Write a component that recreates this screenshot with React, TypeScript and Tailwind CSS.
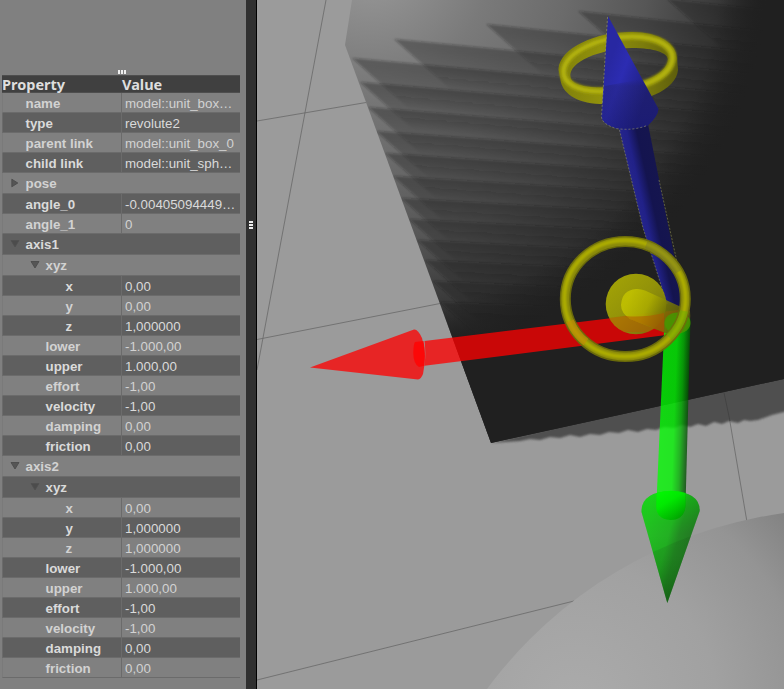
import React from "react";

type Row = {
  name: string;
  value?: string;
  level: number;
  tall?: boolean;
  arrow?: "open" | "closed";
};

const axis = (title: string, y: string): Row[] => [
  { name: title, level: 0, tall: true, arrow: "open" },
  { name: "xyz", level: 1, tall: true, arrow: "open" },
  { name: "x", value: "0,00", level: 2 },
  { name: "y", value: y, level: 2 },
  { name: "z", value: "1,000000", level: 2 },
  { name: "lower", value: "-1.000,00", level: 1 },
  { name: "upper", value: "1.000,00", level: 1 },
  { name: "effort", value: "-1,00", level: 1 },
  { name: "velocity", value: "-1,00", level: 1 },
  { name: "damping", value: "0,00", level: 1 },
  { name: "friction", value: "0,00", level: 1 },
];

const rows: Row[] = [
  { name: "name", value: "model::unit_box…", level: 0 },
  { name: "type", value: "revolute2", level: 0 },
  { name: "parent link", value: "model::unit_box_0", level: 0 },
  { name: "child link", value: "model::unit_sph…", level: 0 },
  { name: "pose", level: 0, tall: true, arrow: "closed" },
  { name: "angle_0", value: "-0.00405094449…", level: 0 },
  { name: "angle_1", value: "0", level: 0 },
  ...axis("axis1", "0,00"),
  ...axis("axis2", "1,000000"),
];

const indent = ["pl-[22.5px]", "pl-[42.5px]", "pl-[62.5px]"];

function PropertyRow({ row, index }: { row: Row; index: number }) {
  const dark = index % 2 === 1;
  return (
    <div
      className={`flex border-b border-[#6b6b6b] ${row.tall ? "h-[21px]" : "h-5"} ${
        dark ? "border-l bg-[#5f5f5f] text-[#dadada]" : "border-l border-l-[#7a7a7a] bg-[#808080] text-[#d2d2d2]"
      }`}
    >
      <div
        className={`flex w-[119px] shrink-0 items-center font-bold leading-none ${
          row.arrow ? (row.level ? "pl-[27px]" : "pl-[7px]") : indent[row.level]
        } ${row.value ? "border-r border-[#6b6b6b]" : ""}`}
      >
        {row.arrow && (
          <svg viewBox="0 0 10 10" className="mr-[5.5px] h-2.5 w-2.5 shrink-0">
            <path
              d={row.arrow === "open" ? "M1 1.5H9L5 8Z" : "M1.8 1.2L7.8 5L1.8 8.8Z"}
              fill={dark ? "#4c4c4c" : "#555"}
              stroke={dark ? "#505050" : "#484848"}
              strokeWidth="0.8"
            />
          </svg>
        )}
        <span className="pt-[2px]">{row.name}</span>
      </div>
      {row.value && (
        <div className="flex items-center whitespace-nowrap pl-[3px] pt-[2px] leading-none">{row.value}</div>
      )}
    </div>
  );
}

/* Shadow stair edges across the box face: start x, start y, slope. */
const stairs: [number, number, number][] = [
  [758, -1, 0.11],
  [667, -1, 0.11],
  [578, 11, 0.108],
  [486, 24, 0.105],
  [394, 39, 0.097],
  [352, 58, 0.092],
  [360, 82, 0.086],
  [368, 107, 0.082],
  [376, 131, 0.075],
  [385, 153, 0.07],
  [393, 176, 0.063],
  [401, 198, 0.057],
  [409, 219, 0.053],
  [417, 240, 0.05],
  [425, 260, 0.048],
  [433, 281, 0.045],
  [440, 302, 0.04],
];

function Stairs() {
  return (
    <g clipPath="url(#boxClip)">
      {stairs.map(([x, y, s], i) => {
        const w = 800 - x;
        const d = i < 6 ? 46 : i < 11 ? 43 : 41;
        return (
          <g key={i}>
            <linearGradient id={`stair${i}`} gradientUnits="userSpaceOnUse" x1={x} y1={y} x2={x - d * s} y2={y + d}>
              <stop offset="0" stopColor="#202020" stopOpacity="0.36" />
              <stop offset="0.15" stopColor="#202020" stopOpacity="0.35" />
              <stop offset="0.5" stopColor="#202020" stopOpacity="0.27" />
              <stop offset="1" stopColor="#202020" stopOpacity="0" />
            </linearGradient>
            <path
              d={`M${x} ${y}L${x + w} ${y + w * s}V${y + w * s + d}L${x + d * 1.22} ${y + d * 1.08}Z`}
              fill={`url(#stair${i})`}
              filter="url(#soft)"
            />
          </g>
        );
      })}
      <rect x="340" width="450" height="450" fill="url(#falloff)" />
    </g>
  );
}

function Scene() {
  const box = "M352 0L345 45L491 443L784 379V0Z";
  const rim =
    "M563.500 71C565 53 598 36.500 632 36.500C660 37 672.500 47 672.500 58C671 76 645 90 600 91.500C578 91 563 84 563.500 71Z";
  return (
    <svg viewBox="257 0 527 689" className="block h-[689px] w-[527px]">
      <defs>
        <clipPath id="boxClip"><path d={box} /></clipPath>
        <filter id="soft" x="-5%" y="-20%" width="110%" height="140%"><feGaussianBlur stdDeviation="0.8" /></filter>
        <radialGradient id="face" gradientUnits="userSpaceOnUse" cx="370" cy="-40" r="400">
          <stop offset="0.1" stopColor="#909090" />
          <stop offset="0.3" stopColor="#7a7a7a" />
          <stop offset="0.5" stopColor="#6b6b6b" />
          <stop offset="0.7" stopColor="#565656" />
          <stop offset="0.86" stopColor="#3c3c3c" />
          <stop offset="1" stopColor="#202020" />
        </radialGradient>
        <radialGradient id="falloff" gradientUnits="userSpaceOnUse" cx="370" cy="-40" r="400">
          <stop offset="0.88" stopColor="#202020" stopOpacity="0" />
          <stop offset="1" stopColor="#202020" stopOpacity="1" />
        </radialGradient>
        <radialGradient id="ball" gradientUnits="userSpaceOnUse" cx="575" cy="705" r="285">
          <stop offset="0" stopColor="#ababab" />
          <stop offset="0.5" stopColor="#a1a1a1" />
          <stop offset="0.8" stopColor="#949494" />
          <stop offset="1" stopColor="#828282" />
        </radialGradient>
        <linearGradient id="blueCone" gradientUnits="userSpaceOnUse" x1="603" y1="80" x2="646" y2="96">
          <stop offset="0" stopColor="#2828a2" />
          <stop offset="0.35" stopColor="#2c2cb2" />
          <stop offset="1" stopColor="#1e1e7c" />
        </linearGradient>
        <linearGradient id="blueLow" gradientUnits="userSpaceOnUse" x1="0" y1="80" x2="0" y2="130">
          <stop offset="0" stopColor="#20205a" stopOpacity="0" />
          <stop offset="0.12" stopColor="#20205a" stopOpacity="0.3" />
          <stop offset="1" stopColor="#18186a" stopOpacity="0.45" />
        </linearGradient>
        <linearGradient id="blueShaft" gradientUnits="userSpaceOnUse" x1="630" y1="178" x2="657" y2="172">
          <stop offset="0" stopColor="#25258c" />
          <stop offset="0.25" stopColor="#212188" />
          <stop offset="0.6" stopColor="#14144f" />
          <stop offset="1" stopColor="#15154f" />
        </linearGradient>
        <linearGradient id="greenShaft" gradientUnits="userSpaceOnUse" x1="660" y1="420" x2="688" y2="421">
          <stop offset="0" stopColor="#00ff00" />
          <stop offset="0.5" stopColor="#00fa00" />
          <stop offset="0.75" stopColor="#00b800" />
          <stop offset="1" stopColor="#004a00" />
        </linearGradient>
        <linearGradient id="greenCone" gradientUnits="userSpaceOnUse" x1="645" y1="525" x2="694" y2="538">
          <stop offset="0" stopColor="#00ce00" />
          <stop offset="0.5" stopColor="#00b400" />
          <stop offset="0.7" stopColor="#007c00" />
          <stop offset="1" stopColor="#006000" />
        </linearGradient>
        <linearGradient id="greenTop" gradientUnits="userSpaceOnUse" x1="0" y1="490" x2="0" y2="600">
          <stop offset="0" stopColor="#00ff00" stopOpacity="0.4" />
          <stop offset="0.4" stopColor="#00c000" stopOpacity="0.1" />
          <stop offset="1" stopColor="#005000" stopOpacity="0.45" />
        </linearGradient>
        <linearGradient id="greenCap" x1="0" y1="0" x2="0.6" y2="1">
          <stop offset="0" stopColor="#00ff00" />
          <stop offset="0.45" stopColor="#00ee00" />
          <stop offset="1" stopColor="#00a800" />
        </linearGradient>
        <linearGradient id="disk" x1="0.1" y1="0" x2="1" y2="0.9">
          <stop offset="0" stopColor="#acac04" />
          <stop offset="0.5" stopColor="#999908" />
          <stop offset="1" stopColor="#70700e" />
        </linearGradient>
        <linearGradient id="rod" gradientUnits="userSpaceOnUse" x1="630" y1="295" x2="682" y2="322">
          <stop offset="0" stopColor="#c2c200" />
          <stop offset="0.35" stopColor="#acac00" />
          <stop offset="0.65" stopColor="#777705" />
          <stop offset="1" stopColor="#5c5a0e" />
        </linearGradient>
        <linearGradient id="bandShade" gradientUnits="userSpaceOnUse" x1="560" y1="70" x2="678" y2="70">
          <stop offset="0" stopColor="#80800b" />
          <stop offset="0.35" stopColor="#92920c" />
          <stop offset="0.7" stopColor="#7c7c0c" />
          <stop offset="1" stopColor="#5e5e0c" />
        </linearGradient>
        <clipPath id="ballClip"><circle cx="844" cy="953" r="444" /></clipPath>
      </defs>

      <rect x="257" width="527" height="689" fill="#9b9b9b" />
      <g stroke="#686868" strokeWidth="0.8" fill="none">
        <path d="M326 0L257 370M257 121L366 102.5M257 339.500L440 303.500M257 680L574 601" />
        <path d="M723 386L730 422L747 522" />
      </g>

      <path
        d="M491 443L784 370H800V406L784 412L772 415L758 420L750 421L744 420L738 423L729 421L722 424L714 422L706 426L698 424L690 427L682 425L674 428L664 427L656 430L647 429L638 432L628 430L619 433L609 432L600 435L590 434L580 437L570 435L560 438L550 437L540 440L530 439L520 441Z"
        fill="#505050"
        filter="url(#soft)"
      />
      <path d="M723 388L730 421" stroke="#424242" strokeWidth="0.9" />
      <path d={box} fill="url(#face)" />
      <Stairs />

      <circle cx="844" cy="953" r="444" fill="url(#ball)" />

      {/* upper joint ring */}
      <path
        fillRule="evenodd"
        fill="url(#bandShade)"
        d="M558.500 69C560 48 595 32 632 32C660 32 676 44 677 58L678 70C676 90 645 104 600 104C575 103 562 92 560.500 80ZM570.500 77C568 62 600 49 632 48C655 48 667 53 668 59C667 76 640 87 600 87.500C583 87 572 85 570.500 77Z"
      />
      <path d={rim} fill="none" stroke="#92920b" strokeWidth="8" filter="url(#soft)" />
      <path d={rim} fill="none" stroke="#b2b20c" strokeWidth="4" filter="url(#soft)" />

      {/* blue arrow */}
      <path d="M619 129L648 124L685 310L667 304L643 228Z" fill="url(#blueShaft)" />
      <path d="M619.500 130L643 228L667 304M659 180L677 262" stroke="#99995a" strokeOpacity="0.75" strokeWidth="0.7" strokeDasharray="2 1.5" fill="none" />
      <path d="M608 16L658.500 109Q658 116 648 125.500Q633 131 616 128.500Q601 123 601.500 116Z" fill="url(#blueCone)" />
      <path d="M604.500 86L642.500 79L658.500 109Q658 116 648 125.500Q633 131 616 128.500Q601 123 601.500 116Z" fill="url(#blueLow)" />
      <path d="M607.500 17L604 75L601.500 117Q602 124 616 128.500Q633 131 647 125.500" stroke="#8d8d68" strokeWidth="0.7" strokeDasharray="2 2" fill="none" />

      {/* red arrow */}
      <path d="M310 367.500L414 329.500Q418 329 422 338Q427 355 423 374Q421 379 418 379.500Z" fill="#ff0000" fillOpacity="0.76" />
      <path d="M424.500 341L678 310L682 333L424.500 365.800Q426 353 424.500 341Z" fill="#ff0000" fillOpacity="0.76" />
      <path d="M415 342L423.500 341Q426 353 424.200 365.800L419 367Q413.500 364 413.300 353Q413.500 344 415 342Z" fill="#ff0505" fillOpacity="0.88" />

      {/* green arrow */}
      <path d="M664.500 322Q677 310 690.500 319L685.500 506Q684 520 670.500 520Q657 519 656.300 506Z" fill="url(#greenShaft)" fillOpacity="0.77" />
      <path d="M641.500 512Q641 492 671 491Q700 492 699.700 511L667.300 603Z" fill="url(#greenCone)" fillOpacity="0.75" />
      <path d="M641.500 512Q641 492 671 491Q700 492 699.700 511L667.300 603Z" fill="url(#greenTop)" />
      <path d="M641.500 512Q641 492 671 491Q700 492 699.700 511L667.300 603Z" fill="#204020" fillOpacity="0.13" clipPath="url(#ballClip)" />
      <path d="M656.500 493Q671 488.500 685.500 493L685.500 506Q684 520 670.500 520Q656 519 656.300 506Z" fill="url(#greenCap)" fillOpacity="0.82" />

      {/* front joint axis */}
      <circle cx="636" cy="304" r="30.300" fill="url(#disk)" fillOpacity="0.94" />
      <path d="M609 318Q640 314 664 311Q661 327 648 332L624 332Q614 327 609 318Z" fill="#b65800" fillOpacity="0.5" />
      <path d="M636 289Q640 288.500 645 290.500L690 311Q692 330 678 333L665 333L630 319Q621 313 621 305Q622 290 636 289Z" fill="url(#rod)" fillOpacity="0.87" />
      <path d="M625 316Q643 318 664 313V332L632 320Z" fill="#b45200" fillOpacity="0.5" />
      <ellipse cx="677.500" cy="323" rx="13" ry="10.500" fill="#479600" fillOpacity="0.85" />
      <g fill="none">
        <ellipse cx="625.300" cy="299" rx="60" ry="57.500" stroke="#6e6e0a" strokeOpacity="0.95" strokeWidth="11" />
        <ellipse cx="625.300" cy="299" rx="60" ry="57.500" stroke="#88880a" strokeWidth="8" />
        <ellipse cx="625" cy="298.500" rx="60.500" ry="58" stroke="#adad06" strokeWidth="4" filter="url(#soft)" />
        <path d="M570 321Q576 335 586 342" stroke="#c18a06" strokeWidth="8" strokeOpacity="0.65" />
        <path d="M646 245Q667 253 678 272" stroke="#74742f" strokeWidth="8" strokeOpacity="0.4" />
        <path d="M684 311Q681 326 669 337" stroke="#63b400" strokeWidth="8" strokeOpacity="0.45" />
      </g>
    </svg>
  );
}

export default function App() {
  return (
    <div className="flex h-[689px] w-[784px] overflow-hidden bg-[#808080] font-['Liberation_Sans',Arial,sans-serif] text-[13.33px]">
      <aside className="flex w-[246px] shrink-0 flex-col pl-[2px] pr-[6px]">
        <div className="flex h-[75px] items-end justify-center gap-[1px] pb-[1px] pl-[2px]">
          <i className="h-1 w-[2px] bg-[#eee]" />
          <i className="h-1 w-[2px] bg-[#eee]" />
          <i className="h-1 w-[2px] bg-[#eee]" />
        </div>
        <div className="flex h-[18px] items-center border-y border-[#4e4e4e] bg-[#404040] font-['Noto_Sans',sans-serif] text-[14.5px] font-bold leading-none text-[#dedede]">
          <span className="w-[120px] pt-px">Property</span>
          <span className="pt-px">Value</span>
        </div>
        {rows.map((row, i) => (
          <PropertyRow key={i} row={row} index={i} />
        ))}
      </aside>
      <div className="flex w-[11px] shrink-0 flex-col items-center gap-[1px] border-r border-black bg-[#303030] pt-[221px]">
        <i className="h-[2px] w-1 bg-[#eee]" />
        <i className="h-[2px] w-1 bg-[#eee]" />
        <i className="h-[2px] w-1 bg-[#eee]" />
      </div>
      <main className="w-[527px] shrink-0">
        <Scene />
      </main>
    </div>
  );
}
